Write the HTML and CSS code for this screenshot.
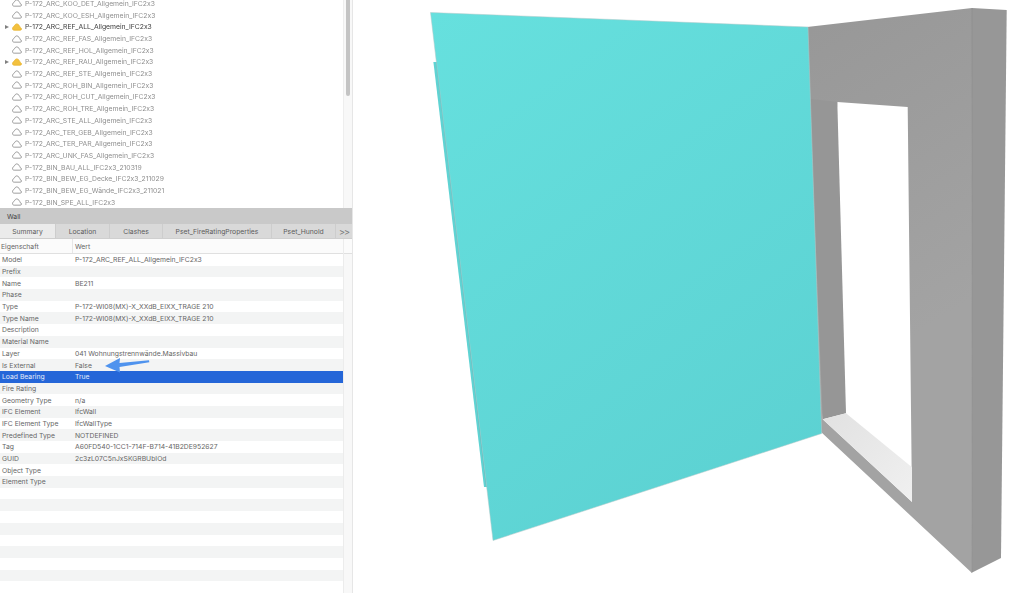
FILE: index.html
```html
<!DOCTYPE html>
<html lang="de">
<head>
<meta charset="utf-8">
<title>Wall</title>
<link rel="stylesheet" href="styles.css">
</head>
<body>
<svg class="defs" width="0" height="0" aria-hidden="true">
  <symbol id="cloud" viewBox="0 0 12 9">
    <path d="M2.6 8.3h7.3c.9 0 1.5-.6 1.5-1.4 0-.8-.6-1.4-1.4-1.5C9.3 3.4 7.7.8 5.8.8 4.5.8 3.6 1.7 3 3 1.700 3.900.6 5.300.6 6.700c0 .9.9 1.600 2 1.600z"/>
  </symbol>
</svg>
<div class="app">
  <aside class="side">
    <div class="tree-wrap">
      <ul class="tree">
        <li class="node"><span class="arrow"></span><svg class="cloud"><use href="#cloud"/></svg><span>P-172_ARC_KOO_DET_Allgemein_IFC2x3</span></li>
        <li class="node"><span class="arrow"></span><svg class="cloud"><use href="#cloud"/></svg><span>P-172_ARC_KOO_ESH_Allgemein_IFC2x3</span></li>
        <li class="node active"><span class="arrow on"></span><svg class="cloud loaded"><use href="#cloud"/></svg><span>P-172_ARC_REF_ALL_Allgemein_IFC2x3</span></li>
        <li class="node"><span class="arrow"></span><svg class="cloud"><use href="#cloud"/></svg><span>P-172_ARC_REF_FAS_Allgemein_IFC2x3</span></li>
        <li class="node"><span class="arrow"></span><svg class="cloud"><use href="#cloud"/></svg><span>P-172_ARC_REF_HOL_Allgemein_IFC2x3</span></li>
        <li class="node"><span class="arrow on"></span><svg class="cloud loaded"><use href="#cloud"/></svg><span>P-172_ARC_REF_RAU_Allgemein_IFC2x3</span></li>
        <li class="node"><span class="arrow"></span><svg class="cloud"><use href="#cloud"/></svg><span>P-172_ARC_REF_STE_Allgemein_IFC2x3</span></li>
        <li class="node"><span class="arrow"></span><svg class="cloud"><use href="#cloud"/></svg><span>P-172_ARC_ROH_BIN_Allgemein_IFC2x3</span></li>
        <li class="node"><span class="arrow"></span><svg class="cloud"><use href="#cloud"/></svg><span>P-172_ARC_ROH_CUT_Allgemein_IFC2x3</span></li>
        <li class="node"><span class="arrow"></span><svg class="cloud"><use href="#cloud"/></svg><span>P-172_ARC_ROH_TRE_Allgemein_IFC2x3</span></li>
        <li class="node"><span class="arrow"></span><svg class="cloud"><use href="#cloud"/></svg><span>P-172_ARC_STE_ALL_Allgemein_IFC2x3</span></li>
        <li class="node"><span class="arrow"></span><svg class="cloud"><use href="#cloud"/></svg><span>P-172_ARC_TER_GEB_Allgemein_IFC2x3</span></li>
        <li class="node"><span class="arrow"></span><svg class="cloud"><use href="#cloud"/></svg><span>P-172_ARC_TER_PAR_Allgemein_IFC2x3</span></li>
        <li class="node"><span class="arrow"></span><svg class="cloud"><use href="#cloud"/></svg><span>P-172_ARC_UNK_FAS_Allgemein_IFC2x3</span></li>
        <li class="node"><span class="arrow"></span><svg class="cloud"><use href="#cloud"/></svg><span>P-172_BIN_BAU_ALL_IFC2x3_210319</span></li>
        <li class="node"><span class="arrow"></span><svg class="cloud"><use href="#cloud"/></svg><span>P-172_BIN_BEW_EG_Decke_IFC2x3_211029</span></li>
        <li class="node"><span class="arrow"></span><svg class="cloud"><use href="#cloud"/></svg><span>P-172_BIN_BEW_EG_Wände_IFC2x3_211021</span></li>
        <li class="node"><span class="arrow"></span><svg class="cloud"><use href="#cloud"/></svg><span>P-172_BIN_SPE_ALL_IFC2x3</span></li>
      </ul>
      <div class="scroll-track"><div class="scroll-thumb"></div></div>
    </div>
    <div class="title">Wall</div>
    <div class="tabs">
      <div class="tab tab-summary selected">Summary</div>
      <div class="tab tab-location">Location</div>
      <div class="tab tab-clashes">Clashes</div>
      <div class="tab tab-fire">Pset_FireRatingProperties</div>
      <div class="tab tab-hunold">Pset_Hunold</div>
      <div class="tab tab-more">&gt;&gt;</div>
    </div>
    <div class="props">
      <div class="table">
        <div class="row head"><span class="key">Eigenschaft</span><span class="val">Wert</span></div>
        <div class="row"><span class="key">Model</span><span class="val">P-172_ARC_REF_ALL_Allgemein_IFC2x3</span></div>
        <div class="row alt"><span class="key">Prefix</span><span class="val"></span></div>
        <div class="row"><span class="key">Name</span><span class="val">BE211</span></div>
        <div class="row alt"><span class="key">Phase</span><span class="val"></span></div>
        <div class="row"><span class="key">Type</span><span class="val">P-172-WI08(MX)-X_XXdB_EIXX_TRAGE 210</span></div>
        <div class="row alt"><span class="key">Type Name</span><span class="val">P-172-WI08(MX)-X_XXdB_EIXX_TRAGE 210</span></div>
        <div class="row"><span class="key">Description</span><span class="val"></span></div>
        <div class="row alt"><span class="key">Material Name</span><span class="val"></span></div>
        <div class="row"><span class="key">Layer</span><span class="val">041 Wohnungstrennwände.Massivbau</span></div>
        <div class="row alt"><span class="key">Is External</span><span class="val">False</span></div>
        <div class="row current"><span class="key">Load Bearing</span><span class="val">True</span></div>
        <div class="row alt"><span class="key">Fire Rating</span><span class="val"></span></div>
        <div class="row"><span class="key">Geometry Type</span><span class="val">n/a</span></div>
        <div class="row alt"><span class="key">IFC Element</span><span class="val">IfcWall</span></div>
        <div class="row"><span class="key">IFC Element Type</span><span class="val">IfcWallType</span></div>
        <div class="row alt"><span class="key">Predefined Type</span><span class="val">NOTDEFINED</span></div>
        <div class="row"><span class="key">Tag</span><span class="val">A60FD540-1CC1-714F-B714-41B2DE952627</span></div>
        <div class="row alt"><span class="key">GUID</span><span class="val">2c3zL07C5nJxSKGRBUbIOd</span></div>
        <div class="row"><span class="key">Object Type</span><span class="val"></span></div>
        <div class="row alt"><span class="key">Element Type</span><span class="val"></span></div>
        <div class="row"></div><div class="row alt"></div>
        <div class="row"></div><div class="row alt"></div>
        <div class="row"></div><div class="row alt"></div>
        <div class="row"></div><div class="row alt"></div>
        <div class="row"></div><div class="row alt"></div>
      </div>
      <div class="gutter"><div class="gutter-head"></div></div>
      <svg class="callout" viewBox="0 0 50 18" aria-hidden="true">
        <path d="M0 8 L15 0 L14.500 5 L44 2.300 L44.300 4.300 L14.500 9 L15 14.500 Z"/>
      </svg>
    </div>
  </aside>
  <main class="viewer">
    <svg class="model" viewBox="353 0 671 593" preserveAspectRatio="none" aria-label="3D wall model">
      <defs>
        <linearGradient id="teal" gradientUnits="userSpaceOnUse" x1="431" y1="13" x2="821" y2="540">
          <stop offset="0" stop-color="#66e0de"/>
          <stop offset="1" stop-color="#5bd0d1"/>
        </linearGradient>
        <linearGradient id="front" gradientUnits="userSpaceOnUse" x1="808" y1="30" x2="972" y2="300">
          <stop offset="0" stop-color="#989898"/>
          <stop offset="1" stop-color="#a3a3a3"/>
        </linearGradient>
        <linearGradient id="sill" gradientUnits="userSpaceOnUse" x1="825" y1="420" x2="912" y2="500">
          <stop offset="0" stop-color="#e2e2e2"/>
          <stop offset="1" stop-color="#f0f0f0"/>
        </linearGradient>
      </defs>
      <polygon class="side-face" points="972,8 1006.700,10 1001,558 971.700,572.700"/>
      <path class="front-face" fill-rule="evenodd" d="M807 27 L972 8 L971.700 572.700 L821 432 Z M837.300 102 L907.700 107 L912 502 L822.700 419.300 Z"/>
      <polygon class="reveal" points="810,99 837.300,102 846,413.300 822.700,419.300"/>
      <polygon class="sill" points="822.700,419.300 846,413.300 912,467.300 912,501.700"/>
      <line class="edge" x1="972" y1="8" x2="971.700" y2="572.700"/>
      <polygon class="panel-back" points="433.400,62 437,62 487,487 484,487"/>
      <line class="panel-seam" x1="436.500" y1="62" x2="486.500" y2="487"/>
      <polygon class="panel" points="430.500,12.500 808,27 821.700,433.500 493,540.500"/>
    </svg>
  </main>
</div>
</body>
</html>
```
FILE: styles.css
```css
* { box-sizing: border-box; }
html, body { margin: 0; height: 100%; overflow: hidden; background: #fff; }
body { font-family: Inter, "Liberation Sans", sans-serif; font-size: 6.8px; color: #666; font-feature-settings: "calt" 0; }
.defs { position: absolute; }
.app { display: flex; height: 593px; }

.side { width: 353px; flex: none; display: flex; flex-direction: column; border-right: 1px solid #e6e6e6; filter: blur(.3px); }

.tree-wrap { height: 208px; flex: none; display: flex; justify-content: space-between; overflow: hidden; }
.tree { list-style: none; margin: 0; padding: 0; height: 208px; display: flex; flex-direction: column; justify-content: flex-end; flex: 1; }
.node { height: 11.7px; flex: none; display: flex; align-items: center; color: #8f8f8f; white-space: nowrap; }
.node.active { color: #3c3c3c; }
.arrow { width: 12px; flex: none; }
.arrow.on::before { content: ""; display: block; margin-left: 5px; width: 0; height: 0; border-left: 4px solid #808080; border-top: 2.500px solid transparent; border-bottom: 2.500px solid transparent; }
.cloud { width: 10px; height: 8px; flex: none; margin-right: 3px; fill: none; stroke: #8a8a8a; stroke-width: 1; }
.cloud.loaded { fill: #f3c13f; stroke: #e8b32e; }
.scroll-track { width: 9px; flex: none; background: #f8f8f8; border-left: 1px solid #eee; display: flex; justify-content: center; }
.scroll-thumb { width: 4px; height: 96px; background: #c4c4c4; border-radius: 0 0 2px 2px; }

.title { height: 16px; flex: none; background: #c9c9c9; color: #444; padding-left: 7px; display: flex; align-items: center; }

.tabs { height: 15px; flex: none; display: flex; background: #d9d9d9; border-bottom: 1px solid #cfcfcf; }
.tab { display: flex; align-items: center; justify-content: center; padding-top: 1px; border-right: 1px solid #cdcdcd; color: #5c5c5c; }
.tab.selected { background: #ebebeb; }
.tab-summary { width: 56px; }
.tab-location { width: 54px; }
.tab-clashes { width: 53px; }
.tab-fire { width: 109px; }
.tab-hunold { width: 64px; }
.tab-more { flex: 1; border-right: 0; color: #777; font-size: 9px; letter-spacing: -1px; }

.props { flex: 1; display: flex; position: relative; overflow: hidden; }
.table { flex: 1; }
.row { height: 11.7px; display: flex; align-items: center; background: #fff; }
.row.alt { background: #f3f4f4; }
.row.head { height: 15px; background: #fbfbfb; border-bottom: 1px solid #e0e0e0; }
.row.current { background: #2566d8; color: #e4ecfa; }
.key { width: 75px; flex: none; padding-left: 2px; }
.val { flex: 1; white-space: nowrap; }
.head .key { padding-left: 1px; }
.head .val { border-left: 1px solid #e6e6e6; margin-left: -3px; padding-left: 2px; height: 100%; display: flex; align-items: center; }
.gutter { width: 9px; flex: none; background: #f8f8f8; border-left: 1px solid #ececec; }
.gutter-head { height: 15px; background: #fbfbfb; border-bottom: 1px solid #e0e0e0; }
.callout { position: absolute; left: 105px; top: 119px; width: 50px; height: 18px; fill: #4f93ee; }

.viewer { flex: 1; min-width: 0; }
.model { display: block; width: 100%; height: 100%; }
.panel { fill: url(#teal); stroke: #b5c9c9; stroke-width: .5; }
.panel-back { fill: #5fd3d3; }
.panel-seam { stroke: #52a8aa; stroke-width: .7; }
.front-face { fill: url(#front); }
.side-face { fill: #979797; }
.reveal { fill: #969696; }
.sill { fill: url(#sill); }
.edge { stroke: #8c8c8c; stroke-width: .7; }
```
